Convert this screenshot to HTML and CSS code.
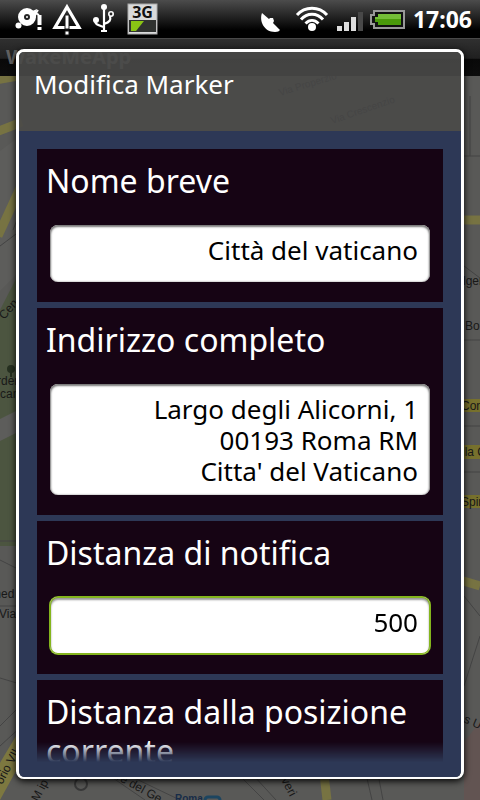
FILE: index.html
```html
<!DOCTYPE html>
<html lang="it">
<head>
<meta charset="utf-8">
<meta name="viewport" content="width=device-width, initial-scale=1">
<title>WakeMeApp</title>
<link rel="stylesheet" href="styles.css">
</head>
<body>
<header class="status">
  <svg class="status-icons" width="150" height="38" viewBox="0 0 150 38" aria-hidden="true">
    <g fill="none" stroke="#fff">
      <circle cx="19" cy="17" r="6" stroke-width="6"/>
      <path d="M25 21L28 13L30 10M26 12l5 3" stroke-width="2"/>
      <path d="M59 7L71 27.5H47Z" stroke-width="3.2"/>
      <path d="M96 8V30M93 31h6M87 20c0 5 3 5 9 7M96 24c6-2 7-4 6-8" stroke-width="2.2"/>
      <circle cx="103" cy="14" r="2.2" stroke-width="1.6"/>
    </g>
    <g fill="#fff">
      <circle cx="19" cy="17" r="1"/>
      <path d="M22 12l7-3-1 5z"/>
      <circle cx="10.500" cy="25.500" r="3"/>
      <path d="M29.500 15h4v10h-4zM29.500 27h4v3h-4z"/>
      <circle cx="96" cy="7" r="3"/><circle cx="88" cy="20" r="3"/>
    </g>
    <path d="M57 15h4v14h-4zM57 31h4v4h-4z" fill="#fff" stroke="#171717" stroke-width="1"/>
    <rect x="120" y="4" width="29" height="30" fill="#d9dadb" stroke="#aaa"/>
    <rect x="121" y="20" width="27" height="12" fill="#303230"/>
    <path d="M123 21h13l-8 10h-5z" fill="#8ac414"/>
    <text class="network" x="134.500" y="18" text-anchor="middle">3G</text>
  </svg>
  <svg class="status-icons" width="146" height="38" viewBox="0 0 146 38" aria-hidden="true">
    <path d="M3 13c-3 8 2 19 13 19 3 0 4-1 5-2L14 23l1-2-1-3-3 0-1 1z" fill="#fff"/>
    <g fill="none" stroke="#fff" stroke-width="3">
      <path d="M38 15c8-9 22-9 30 0M42 19.500c6-7 16-7 22 0M46.500 23.500c4-4 9-4 13 0"/>
    </g>
    <circle cx="53" cy="27" r="4" fill="#fff"/>
    <path d="M78 26h5v5h-5zM85 22h5v9h-5zM92 17h5v14h-5z" fill="#ddd"/>
    <path d="M99 12h5v19h-5z" fill="#484848"/>
    <path d="M116 11h30v17h-30v-4h-3v-9h3z" fill="#111" stroke="#999" stroke-width="2" transform="translate(-1 0)"/>
    <path d="M119 14h23v11h-23v-3h-3v-5h3z" fill="#4a9a0b"/>
    <path d="M119 14h23v5h-26v-2h3z" fill="#74bd38"/>
  </svg>
  <time class="clock">17:06</time>
</header>
<main class="stage">
  <div class="backdrop" aria-hidden="true">
    <div class="appbar">WakeMeApp</div>
    <svg class="map" viewBox="0 0 480 724" preserveAspectRatio="xMidYMid slice">
      <rect width="480" height="724" fill="#595957"/>
      <path d="M0 234L20 195V470H0z" fill="#4c5540"/>
      <path d="M0 75L20 60V195L0 215zM0 365l20-10v-22l-20 10z" fill="#5d5d5b"/>
      <g fill="none" stroke="#777342" stroke-width="9">
        <path d="M-4 4L18 0M-4 56L22 46M-2 160L20 112M460 144h20M324 698l3 26M460 504l20 6"/>
      </g>
      <path d="M-2 690L22 650v34L0 724z" fill="#7d7840"/>
      <path d="M464 323h16v13h-16zM464 369h16v14h-16zM464 419h16v13h-16z" fill="#77712d"/>
      <path d="M464 666l16-20v78h-16z" fill="#625452"/>
      <g fill="none" stroke="#444" stroke-width="1">
        <path d="M0 170l20-15M13 154l7-18M0 465h20M0 484l20 10M0 530h20M0 602l20 6M0 650l20-20M0 670l24-22"/>
        <path d="M470 20v60M464 80h16M464 190l16 12M464 264h16M464 350h16M464 396h16M480 560l-16 50M464 520l16 20M110 700l35 24M130 700l50 24M240 700l24 24M254 700l22 24M366 698l6 26M378 698l5 26"/>
      </g>
      <circle cx="81" cy="708" r="6" fill="none" stroke="#383838" stroke-width="2"/>
      <g class="places">
        <text transform="translate(4 244) rotate(-48)">Cen</text>
        <text x="-3" y="309">rden</text><text x="0" y="322">cano</text>
        <text x="-9" y="522">med</text><text x="-1" y="542">Via</text>
        <text transform="translate(2 709) rotate(-62)">orio VII</text>
        <text transform="translate(38 726) rotate(-62)">M ip</text>
        <text transform="translate(116 703) rotate(29)">re del Ge</text>
        <text transform="translate(281 704) rotate(62)">veri</text>
        <text x="463" y="209">lgeri</text><text x="465" y="254">Borg</text>
        <text x="461" y="334">Cond</text><text x="462" y="380">lla C</text>
        <text x="461" y="430">Spin</text>
        <text transform="translate(463 646) rotate(24)">s Urb</text>
        <text class="street" transform="translate(280 20) rotate(-17)">Via Properzio</text>
        <text class="street" transform="translate(332 48) rotate(-19)">Via Crescenzio</text>
        <text class="station" x="175" y="726">Roma</text>
      </g>
      <circle cx="11" cy="293" r="4" fill="#263020"/><path d="M10 294h2v7h-2z" fill="#263020"/>
      <rect x="205" y="721" width="15" height="12" rx="3" fill="none" stroke="#1c4560" stroke-width="3"/>
    </svg>
  </div>
  <form class="dialog" aria-labelledby="dialog-title">
    <h1 class="dialog-title" id="dialog-title">Modifica Marker</h1>
    <div class="dialog-body">
      <div class="fields">
        <div class="field">
          <label for="name">Nome breve</label>
          <input id="name" type="text" value="Città del vaticano">
        </div>
        <div class="field">
          <label for="address">Indirizzo completo</label>
          <textarea id="address" rows="3">Largo degli Alicorni, 1
00193 Roma RM
Citta' del Vaticano</textarea>
        </div>
        <div class="field">
          <label for="distance">Distanza di notifica</label>
          <input class="active" id="distance" type="text" inputmode="numeric" value="500">
        </div>
        <div class="field">
          <label for="current">Distanza dalla posizione corrente</label>
          <input id="current" type="text" readonly>
        </div>
      </div>
    </div>
  </form>
</main>
</body>
</html>
```
FILE: styles.css
```css
* {
  box-sizing: border-box;
}

body {
  margin: 0;
  height: 100vh;
  display: flex;
  flex-direction: column;
  overflow: hidden;
  background: #000;
  color: #fff;
  font-family: "Noto Sans", "Open Sans", sans-serif;
}

.status {
  flex: none;
  display: flex;
  align-items: center;
  height: 38px;
  padding: 0 8px;
  background: linear-gradient(#4c4c4c, #222 45%, #000 80%);
}

.status-icons {
  flex: none;
  display: block;
}

.status-icons + .status-icons {
  margin-left: auto;
}

.network {
  fill: #111;
  font-family: "Open Sans", sans-serif;
  font-size: 16px;
  font-weight: 700;
}

.clock {
  margin-left: 8px;
  font-size: 23px;
  font-weight: 700;
  line-height: 38px;
}

.stage {
  position: relative;
  flex: 1;
  min-height: 0;
  display: flex;
  padding: 11px 16px 21px;
}

.backdrop {
  position: absolute;
  inset: 0;
  display: flex;
  flex-direction: column;
}

.appbar {
  flex: none;
  height: 38px;
  padding-left: 6px;
  border-top: 1px solid #484848;
  background: linear-gradient(#303030, #202020 52%, #090909 55%, #0d0d0d);
  color: #606060;
  font-size: 20px;
  font-weight: 700;
  line-height: 36px;
}

.map {
  display: block;
  flex: 1;
  min-height: 0;
  width: 100%;
}

.places {
  fill: #181818;
  font-family: "Liberation Sans", sans-serif;
  font-size: 12px;
}

.street {
  fill: #222;
  font-size: 10px;
}

.station {
  fill: #172c48;
  font-size: 10px;
  font-weight: 700;
}

.dialog {
  position: relative;
  flex: 1;
  display: flex;
  flex-direction: column;
  margin: 0;
  overflow: hidden;
  border: 3px solid #fff;
  border-bottom-width: 2px;
  border-radius: 8px;
  box-shadow: 0 2px 7px #000;
}

.dialog-title {
  flex: none;
  height: 79px;
  margin: 0;
  padding: 14px 15px;
  background: rgba(73, 73, 72, 0.9);
  font-size: 26px;
  font-weight: 400;
  line-height: 36px;
}

.dialog-body {
  flex: 1;
  min-height: 0;
  display: flex;
  padding: 18px 18px 15px;
  background: #2d3856;
}

.fields {
  flex: 1;
  overflow: hidden;
  display: flex;
  flex-direction: column;
  gap: 6px;
  -webkit-mask-image: linear-gradient(to top, transparent, #000 20px);
  mask-image: linear-gradient(to top, transparent, #000 20px);
}

.field {
  flex: none;
  display: flex;
  flex-direction: column;
  gap: 25px;
  padding: 12px 13px 20px;
  background: #160414;
}

.field label {
  margin: 0 -4px;
  font-size: 32px;
  line-height: 39px;
}

.field input,
.field textarea {
  display: block;
  width: 100%;
  height: 57px;
  margin: 0;
  padding: 8px 12px 16px;
  border: 0;
  border-radius: 8px;
  outline: 0;
  background: #fff;
  box-shadow: inset 0 1px 2px 1px #777;
  color: #000;
  font: 26px/31px "Noto Sans", "Open Sans", sans-serif;
  text-align: right;
  resize: none;
  overflow: hidden;
}

.field textarea {
  height: 111px;
  padding: 10px 12px 8px;
}

.field .active {
  box-shadow: 0 0 0 1px #84b51d, inset 0 0 0 1px #84b51d, inset 0 2px 2px 1px #999;
}
```
